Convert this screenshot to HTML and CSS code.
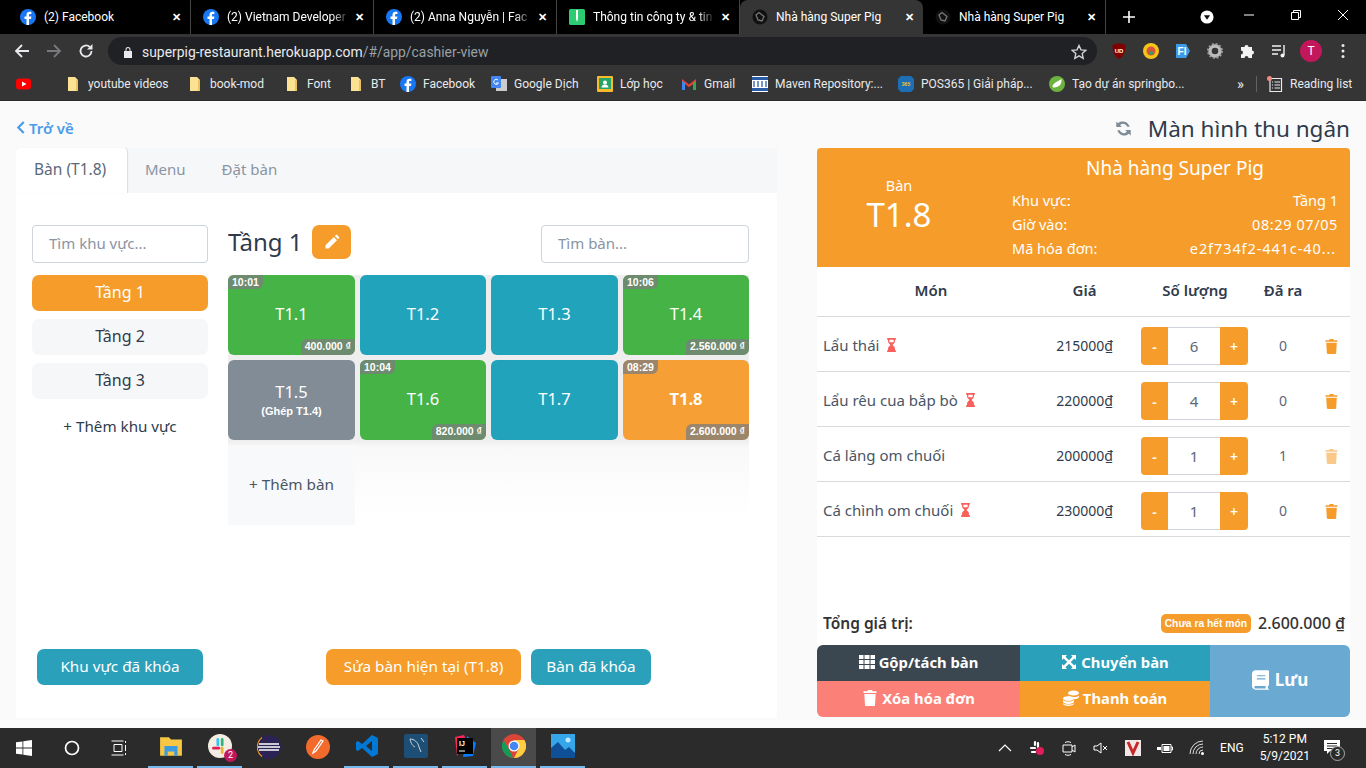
FILE: index.html
```html
<!DOCTYPE html>
<html lang="vi">
<head>
  <meta charset="UTF-8">
  <title>Nhà hàng Super Pig</title>
  <link rel="stylesheet" href="styles.css">
</head>
<body>
  <svg class="sprite" width="0" height="0">
    <symbol id="i-fb" viewBox="0 0 16 16"><circle cx="8" cy="8" r="8" fill="#1877f2"/><path fill="#fff" d="M9 16V10h2l.4-2.400H9V6.200c0-.8.3-1.200 1.200-1.200h1.200V2.900C11 2.800 10.300 2.700 9.600 2.700 7.700 2.700 6.500 3.800 6.500 5.900v1.700H4.500V10h2v6z"/></symbol>
    <symbol id="i-folder" viewBox="0 0 12 16"><path fill="#fde293" d="M1 1h7l3 3v11H1z"/><path fill="#e8c35f" d="M9 4h2v11H9z"/></symbol>
    <symbol id="i-pig" viewBox="0 0 16 16"><circle cx="8" cy="8" r="7.500" fill="#111"/><path fill="none" stroke="#777" stroke-width="1.300" d="M4 6l3-2.500 5 4-2 4.500-4-1z"/></symbol>
    <symbol id="i-pencil" viewBox="0 0 16 16"><path fill="currentColor" d="M1.500 11.300 9.800 3l3.200 3.200-8.300 8.300H1.500zM10.900 1.900l.9-.8c.4-.4 1-.4 1.400 0l1.800 1.800c.4.400.4 1 0 1.400l-.9.900z"/></symbol>
    <symbol id="i-refresh" viewBox="0 0 16 16"><path fill="currentColor" d="M13.800 6.400h-2.300a4 4 0 0 0-6.700-1.500l1.600 1.600H1.200V1.300l1.700 1.700A6.700 6.700 0 0 1 13.800 6.400zM2.200 9.600h2.300a4 4 0 0 0 6.700 1.500L9.600 9.500h5.200v5.200L13.100 13A6.700 6.700 0 0 1 2.200 9.600z"/></symbol>
    <symbol id="i-hourglass" viewBox="0 0 12 16"><path fill="currentColor" d="M1 0h10v2H10v1.500C10 6 8 7 7.200 8 8 9 10 10 10 12.500V14h1v2H1v-2h1v-1.500C2 10 4 9 4.800 8 4 7 2 6 2 3.500V2H1zM3.500 2v1.500c0 .5.100.9.300 1.300h4.400c.2-.4.300-.8.300-1.300V2z"/></symbol>
    <symbol id="i-trash" viewBox="0 0 14 16"><path fill="currentColor" d="M5 0h4l.6 1.300H13.500V3H.5V1.300H4.400zM1.300 4h11.400l-.7 11c0 .6-.5 1-1 1H3c-.5 0-1-.4-1-1z"/></symbol>
    <symbol id="i-grid" viewBox="0 0 16 16"><path fill="currentColor" d="M0 1h4.500v4H0zM5.500 1h5v4h-5zM11.500 1H16v4h-4.500zM0 6h4.500v4H0zM5.500 6h5v4h-5zM11.500 6H16v4h-4.500zM0 11h4.500v4H0zM5.500 11h5v4h-5zM11.500 11H16v4h-4.500z"/></symbol>
    <symbol id="i-move" viewBox="0 0 16 16"><path fill="currentColor" d="M1 1h5L4.500 2.800 8 6.200 11.500 2.800 10 1h5v5l-1.700-1.500L9.800 8l3.500 3.500L15 10v5h-5l1.500-1.700L8 9.800l-3.500 3.500L6 15H1v-5l1.700 1.500L6.200 8 2.700 4.500 1 6z"/></symbol>
    <symbol id="i-coins" viewBox="0 0 16 16"><ellipse cx="10.500" cy="3" rx="5.500" ry="2.500" fill="currentColor"/><path fill="currentColor" d="M5 5.500c1 1 2.500 1.500 5.500 1.500S15 6.500 16 5.500V7c0 1-2 2-5 2.200-1.500-1-3.500-1.400-6-1.400zM0 10c1 1 2.800 1.500 5.500 1.500S10 11 11 10v1.500C11 12.900 8.500 14 5.500 14S0 12.900 0 11.500zM0 13c1 1 2.800 1.500 5.500 1.500S10 14 11 13v.500C11 14.900 8.500 16 5.500 16S0 14.900 0 13.500z"/><ellipse cx="5.500" cy="8.500" rx="5.500" ry="2.300" fill="currentColor"/></symbol>
    <symbol id="i-book" viewBox="0 0 14 16"><path fill="currentColor" fill-rule="evenodd" d="M3 0h10c.6 0 1 .4 1 1v11c0 .5-.3.900-.8 1-.3.600-.3 1.300 0 2 .5.100.8.500.8 1H3c-1.700 0-3-1.300-3-3V3c0-1.700 1.300-3 3-3zM4 4v1h7V4zM4 6.500v1h7v-1zM3 13c-.6 0-1 .4-1 1s.4 1 1 1h8.300c-.2-.7-.2-1.300 0-2z"/></symbol>
    <symbol id="i-star" viewBox="0 0 16 16"><path fill="none" stroke="currentColor" stroke-width="1.400" d="M8 1.500l2 4.400 4.700.5-3.500 3.200 1 4.700L8 11.900l-4.200 2.400 1-4.700L1.300 6.400 6 5.900z"/></symbol>
  </svg>

  <div class="tabstrip">
    <div class="tab"><svg class="favicon"><use href="#i-fb"/></svg><span class="tab-title">(2) Facebook</span><span class="tab-x">✕</span></div>
    <div class="tab"><svg class="favicon"><use href="#i-fb"/></svg><span class="tab-title fade">(2) Vietnam Developer</span><span class="tab-x">✕</span></div>
    <div class="tab"><svg class="favicon"><use href="#i-fb"/></svg><span class="tab-title fade">(2) Anna Nguyễn | Fac</span><span class="tab-x">✕</span></div>
    <div class="tab"><svg class="favicon" viewBox="0 0 16 16"><rect width="16" height="16" rx="1.500" fill="#2ecc71"/><path fill="#fff" d="M7 1h2v9l-1 3-1-3z"/></svg><span class="tab-title fade">Thông tin công ty &amp; tin</span><span class="tab-x">✕</span></div>
    <div class="tab active"><svg class="favicon"><use href="#i-pig"/></svg><span class="tab-title">Nhà hàng Super Pig</span><span class="tab-x">✕</span></div>
    <div class="tab"><svg class="favicon"><use href="#i-pig"/></svg><span class="tab-title">Nhà hàng Super Pig</span><span class="tab-x">✕</span></div>
    <svg class="newtab" viewBox="0 0 12 12"><path fill="none" stroke="#fff" stroke-width="1.600" d="M6 0v12M0 6h12"/></svg>
    <svg class="media-dot" viewBox="0 0 16 16"><circle cx="8" cy="8" r="7.500" fill="#fff"/><path d="M4.500 6h7L8 11z" fill="#111"/></svg>
    <div class="winctl">
      <svg viewBox="0 0 12 12"><path stroke="#fff" d="M1 6h10"/></svg>
      <svg viewBox="0 0 12 12"><path fill="none" stroke="#fff" d="M1.500 3.500h7v7h-7zM3.500 3.500v-2h7v7h-2"/></svg>
      <svg viewBox="0 0 12 12"><path stroke="#fff" d="M1 1l10 10M11 1L1 11"/></svg>
    </div>
  </div>

  <div class="toolbar">
    <svg class="nav-ico" viewBox="0 0 16 16"><path fill="none" stroke="#e8eaed" stroke-width="1.800" d="M15 8H2M8 2L2 8l6 6"/></svg>
    <svg class="nav-ico" viewBox="0 0 16 16"><path fill="none" stroke="#77797c" stroke-width="1.800" d="M1 8h13M8 2l6 6-6 6"/></svg>
    <svg class="nav-ico" viewBox="0 0 16 16"><path fill="none" stroke="#e8eaed" stroke-width="1.800" d="M13.500 8a5.500 5.500 0 1 1-1.700-4"/><path fill="#e8eaed" d="M14.500 1v5.500H9z"/></svg>
    <div class="omnibox">
      <svg class="lock" viewBox="0 0 10 12"><path fill="#e8eaed" d="M1 5h8v7H1zM2.500 5V3.500a2.500 2.500 0 0 1 5 0V5H6.500V3.500a1.500 1.500 0 0 0-3 0V5z"/></svg>
      <span class="url"><b>superpig-restaurant.herokuapp.com</b>/#/app/cashier-view</span>
      <svg class="star"><use href="#i-star"/></svg>
    </div>
    <div class="extensions">
      <svg viewBox="0 0 16 16"><path fill="#800000" d="M1.500 2L8 0l6.500 2c0 6-1 10.500-6.500 14C2.500 12.500 1.500 8 1.500 2z"/><text x="8" y="9.500" class="ext-text">UD</text></svg>
      <svg viewBox="0 0 16 16"><circle cx="8" cy="8" r="8" fill="#f5c518"/><circle cx="8" cy="8" r="4.500" fill="#d9543f"/><circle cx="8" cy="10" r="2" fill="#3c9a5f"/></svg>
      <svg viewBox="0 0 16 16"><path fill="#3d9ae8" d="M1 1h10l4 7-4 7H1z"/><text x="7" y="11.500" class="ext-text big">FI</text></svg>
      <svg viewBox="0 0 16 16"><circle cx="8" cy="8" r="5" fill="none" stroke="#bdbdbd" stroke-width="3.400"/><circle cx="8" cy="8" r="7" fill="none" stroke="#9b9b9b" stroke-width="2" stroke-dasharray="2 1.700"/></svg>
      <svg viewBox="0 0 16 16"><path fill="#f1f3f4" d="M2 4h3.500a2 2 0 1 1 4 0H13v3.500a2 2 0 1 1 0 4V15H9.500a2 2 0 1 0-4 0H2v-3.500a2 2 0 1 0 0-4z"/></svg>
      <svg viewBox="0 0 16 16"><path fill="none" stroke="#f1f3f4" stroke-width="1.400" d="M1 3h9M1 7h9M1 11h6M13 2v10"/><circle cx="11.500" cy="12.500" r="2" fill="#f1f3f4"/></svg>
    </div>
    <span class="avatar">T</span>
    <svg class="kebab" viewBox="0 0 4 16"><circle cx="2" cy="2.500" r="1.500" fill="#e8eaed"/><circle cx="2" cy="8" r="1.500" fill="#e8eaed"/><circle cx="2" cy="13.500" r="1.500" fill="#e8eaed"/></svg>
  </div>

  <div class="bookmarks">
    <div class="bm"><svg class="bm-ico" viewBox="0 0 16 16"><rect y="2.500" width="15" height="11" rx="3" fill="#f00"/><path fill="#fff" d="M6 5.500l4.500 2.500L6 10.500z"/></svg></div>
    <div class="bm"><svg class="bm-ico"><use href="#i-folder"/></svg>youtube videos</div>
    <div class="bm"><svg class="bm-ico"><use href="#i-folder"/></svg>book-mod</div>
    <div class="bm"><svg class="bm-ico"><use href="#i-folder"/></svg>Font</div>
    <div class="bm"><svg class="bm-ico"><use href="#i-folder"/></svg>BT</div>
    <div class="bm"><svg class="bm-ico"><use href="#i-fb"/></svg>Facebook</div>
    <div class="bm"><svg class="bm-ico" viewBox="0 0 16 16"><rect x="5" y="3" width="11" height="12" fill="#ccc"/><rect width="10" height="12" rx="1" fill="#4285f4"/><path fill="none" stroke="#fff" d="M7 4a2.500 2.500 0 1 0 .500 3H5"/></svg>Google Dịch</div>
    <div class="bm"><svg class="bm-ico" viewBox="0 0 16 16"><rect width="16" height="16" rx="1" fill="#f9bb2d"/><rect x="2" y="2" width="12" height="11" fill="#25a667"/><circle cx="8" cy="6.500" r="2" fill="#fff"/><path fill="#fff" d="M4.500 11.500c0-4 7-4 7 0z"/></svg>Lớp học</div>
    <div class="bm"><svg class="bm-ico" viewBox="0 0 16 16"><path fill="#ea4335" d="M1 3l7 5.500L15 3v3L8 11 1 6z"/><path fill="#4285f4" d="M1 5v9h3V7z"/><path fill="#34a853" d="M15 5v9h-3V7z"/></svg>Gmail</div>
    <div class="bm"><svg class="bm-ico" viewBox="0 0 16 16"><rect width="16" height="16" fill="#fff"/><rect y="1" width="16" height="3" fill="#2a5ca8"/><rect y="12" width="16" height="3" fill="#2a5ca8"/><path stroke="#2a5ca8" stroke-width="1.300" d="M2 5v6M6 5v6M10 5v6M14 5v6"/></svg>Maven Repository:...</div>
    <div class="bm"><svg class="bm-ico" viewBox="0 0 16 16"><path fill="#1c6fb5" d="M3 0h10l3 3v10l-3 3H3l-3-3V3z"/><text x="8" y="10" class="ext-text pos">365</text></svg>POS365 | Giải pháp...</div>
    <div class="bm"><svg class="bm-ico" viewBox="0 0 16 16"><circle cx="8" cy="8" r="8" fill="#6db33f"/><path fill="#fff" d="M12.500 3c.5 4.500-2 8.500-7.500 8.500-1 0-1.500-.5-1.500-1C4 7 8 6 12.500 3z"/></svg>Tạo dự án springbo...</div>
    <div class="bm-end">
      <span class="bm-more">»</span>
      <span class="bm-sep"></span>
      <svg class="bm-ico" viewBox="0 0 16 16"><path fill="none" stroke="#e8eaed" stroke-width="1.200" d="M3 2.500h11.500v13H3zM5 6h1M7.500 6H13M5 9h1M7.500 9H13M5 12h1M7.500 12H13"/><circle cx="2.500" cy="2.500" r="2.500" fill="#f28b82"/></svg>
      <span>Reading list</span>
    </div>
  </div>

  <div class="page">
    <div class="col-left">
      <div class="page-head"><a class="back" href="#"><svg viewBox="0 0 8 12"><path fill="none" stroke="currentColor" stroke-width="2" d="M7 1L2 6l5 5"/></svg>Trở về</a></div>

      <div class="navtabs">
        <a class="navtab active">Bàn (T1.8)</a>
        <a class="navtab">Menu</a>
        <a class="navtab">Đặt bàn</a>
      </div>

      <div class="panel">
        <div class="panel-body">
          <aside class="areas">
            <input class="search" placeholder="Tìm khu vực...">
            <div class="area selected">Tầng 1</div>
            <div class="area">Tầng 2</div>
            <div class="area">Tầng 3</div>
            <div class="area-add">+ Thêm khu vực</div>
          </aside>

          <section class="floor">
            <div class="floor-head">
              <h2>Tầng 1</h2>
              <button class="edit-btn"><svg><use href="#i-pencil"/></svg></button>
              <input class="search search-table" placeholder="Tìm bàn...">
            </div>
            <div class="tables">
              <div class="tile busy"><span class="time">10:01</span>T1.1<span class="price">400.000 ₫</span></div>
              <div class="tile free">T1.2</div>
              <div class="tile free">T1.3</div>
              <div class="tile busy"><span class="time">10:06</span>T1.4<span class="price">2.560.000 ₫</span></div>
              <div class="tile merged">T1.5<small>(Ghép T1.4)</small></div>
              <div class="tile busy"><span class="time">10:04</span>T1.6<span class="price">820.000 ₫</span></div>
              <div class="tile free">T1.7</div>
              <div class="tile current"><span class="time">08:29</span>T1.8<span class="price">2.600.000 ₫</span></div>
              <div class="tile add">+ Thêm bàn</div>
            </div>
          </section>
        </div>

        <div class="panel-foot">
          <div><button class="btn teal wide">Khu vực đã khóa</button></div>
          <div class="foot-right">
            <button class="btn orange">Sửa bàn hiện tại (T1.8)</button>
            <button class="btn teal">Bàn đã khóa</button>
          </div>
        </div>
      </div>
    </div>

    <div class="col-right">
      <div class="page-head title-row">
        <svg class="refresh"><use href="#i-refresh"/></svg>
        <h1>Màn hình thu ngân</h1>
      </div>

      <div class="bill">
        <div class="bill-head">
          <div class="bill-table"><span>Bàn</span><strong>T1.8</strong></div>
          <div class="bill-info">
            <h3>Nhà hàng Super Pig</h3>
            <div class="info-row"><span>Khu vực:</span><span>Tầng 1</span></div>
            <div class="info-row"><span>Giờ vào:</span><span class="num">08:29 07/05</span></div>
            <div class="info-row"><span>Mã hóa đơn:</span><span class="num code">e2f734f2-441c-40...</span></div>
          </div>
        </div>

        <div class="line line-head">
          <div class="c-name">Món</div><div class="c-price">Giá</div><div class="c-qty">Số lượng</div><div class="c-done">Đã ra</div><div></div>
        </div>
        <div class="line">
          <div class="c-name">Lẩu thái <svg class="wait"><use href="#i-hourglass"/></svg></div>
          <div class="c-price">215000₫</div>
          <div class="c-qty"><div class="stepper"><button>-</button><input value="6"><button>+</button></div></div>
          <div class="c-done">0</div>
          <div class="c-del"><svg><use href="#i-trash"/></svg></div>
        </div>
        <div class="line">
          <div class="c-name">Lẩu rêu cua bắp bò <svg class="wait"><use href="#i-hourglass"/></svg></div>
          <div class="c-price">220000₫</div>
          <div class="c-qty"><div class="stepper"><button>-</button><input value="4"><button>+</button></div></div>
          <div class="c-done">0</div>
          <div class="c-del"><svg><use href="#i-trash"/></svg></div>
        </div>
        <div class="line">
          <div class="c-name">Cá lăng om chuối</div>
          <div class="c-price">200000₫</div>
          <div class="c-qty"><div class="stepper"><button>-</button><input value="1"><button>+</button></div></div>
          <div class="c-done">1</div>
          <div class="c-del off"><svg><use href="#i-trash"/></svg></div>
        </div>
        <div class="line">
          <div class="c-name">Cá chình om chuối <svg class="wait"><use href="#i-hourglass"/></svg></div>
          <div class="c-price">230000₫</div>
          <div class="c-qty"><div class="stepper"><button>-</button><input value="1"><button>+</button></div></div>
          <div class="c-done">0</div>
          <div class="c-del"><svg><use href="#i-trash"/></svg></div>
        </div>

        <div class="total">
          <span class="total-label">Tổng giá trị:</span>
          <span class="pill">Chưa ra hết món</span>
          <span class="total-value">2.600.000 ₫</span>
        </div>

        <div class="actions">
          <button class="act dark"><svg><use href="#i-grid"/></svg>Gộp/tách bàn</button>
          <button class="act blue"><svg><use href="#i-move"/></svg>Chuyển bàn</button>
          <button class="act save"><svg><use href="#i-book"/></svg>Lưu</button>
          <button class="act red"><svg><use href="#i-trash"/></svg>Xóa hóa đơn</button>
          <button class="act amber"><svg><use href="#i-coins"/></svg>Thanh toán</button>
        </div>
      </div>
    </div>
  </div>

  <div class="taskbar">
    <svg class="tb-start" viewBox="0 0 16 16"><path fill="#fff" d="M0 2.300l6.500-.9v6.200H0zM7.300 1.300L16 0v7.600H7.300zM0 8.400h6.500v6.200L0 13.700zM7.300 8.400H16V16l-8.700-1.300z"/></svg>
    <svg class="tb-search" viewBox="0 0 16 16"><circle cx="8" cy="8" r="6.500" fill="none" stroke="#fff" stroke-width="1.700"/></svg>
    <svg class="tb-view" viewBox="0 0 16 16"><path fill="none" stroke="#fff" d="M.5 1h12M3 4.500h8v7H3zM.5 15h12M14.500 1v2M14.500 5v6M14.500 13v2"/></svg>
    <div class="tb-apps">
      <div class="tb-app open"><svg viewBox="0 0 22 22"><path fill="#f7c744" d="M1 3h8l2 2h10v15H1z"/><path fill="#3d9be0" d="M5 11h12v9h-3v-4H8v4H5z"/></svg></div>
      <div class="tb-app open"><svg viewBox="0 0 22 22"><circle cx="11" cy="11" r="11" fill="#f4ede4"/><path stroke="#e01e5a" stroke-width="2.500" stroke-linecap="round" d="M5 13h5"/><path stroke="#36c5f0" stroke-width="2.500" stroke-linecap="round" d="M9 5v5"/><path stroke="#2eb67d" stroke-width="2.500" stroke-linecap="round" d="M13 5v5"/><path stroke="#ecb22e" stroke-width="2.500" stroke-linecap="round" d="M13 13v4"/></svg><span class="tb-badge">2</span></div>
      <div class="tb-app"><svg viewBox="0 0 24 24"><circle cx="12" cy="12" r="12" fill="#2c2255"/><path fill="none" stroke="#f7941e" stroke-width="1.200" d="M5 2.500a12 12 0 0 0 0 19"/><path stroke="#fff" stroke-width="1.500" d="M2 9h20M1 12h22M2 15h20"/></svg></div>
      <div class="tb-app"><svg viewBox="0 0 24 24"><circle cx="12" cy="12" r="12" fill="#f26b2d"/><path fill="none" stroke="#fff" stroke-width="1.300" d="M7 18l3-2 7-10-2-1-7 10z"/></svg></div>
      <div class="tb-app open"><svg viewBox="0 0 24 24"><path fill="#0078d4" d="M17 1l6 3v16l-6 3L7 14l-4 3-2-1V8l2-1 4 3zM17 7l-6 5 6 5z"/></svg></div>
      <div class="tb-app open"><svg viewBox="0 0 24 24"><rect width="24" height="24" rx="2" fill="#1d4f76"/><path fill="none" stroke="#cfd8dc" d="M6 5c4 0 8 3 9 8l2 5M6 5c1 5 3 7 5 8M17 4l3 4"/></svg></div>
      <div class="tb-app open"><svg viewBox="0 0 24 24"><path fill="#fe2857" d="M2 3l9-2 3 7-10 14z"/><path fill="#087cfa" d="M14 2l9 7-3 13-10 1z"/><rect x="4" y="4" width="16" height="16" fill="#000"/><text x="6" y="12" class="ij">IJ</text><path stroke="#fff" d="M6 17h6"/></svg></div>
      <div class="tb-app open on"><svg viewBox="0 0 24 24"><circle cx="12" cy="12" r="12" fill="#db4437"/><path fill="#0f9d58" d="M12 24A12 12 0 0 1 1.600 6L7 15.500 11 24z"/><path fill="#ffcd40" d="M12 24a12 12 0 0 0 10.400-18H12l5 8z"/><circle cx="12" cy="12" r="5.500" fill="#fff"/><circle cx="12" cy="12" r="4.300" fill="#4285f4"/></svg></div>
      <div class="tb-app open"><svg viewBox="0 0 24 24"><rect width="24" height="24" fill="#35a6e8"/><path fill="#0f4f96" d="M0 24V14l7-6 7 8 4-3 6 6v5z"/><circle cx="17" cy="6" r="2.500" fill="#bfe7ff"/></svg></div>
    </div>
    <div class="tray">
      <svg class="t-ico" viewBox="0 0 16 16"><path fill="none" stroke="#fff" stroke-width="1.200" d="M2 11l6-6 6 6"/></svg>
      <svg class="t-ico" viewBox="0 0 16 16"><path stroke="#fff" stroke-width="2.200" stroke-linecap="round" d="M2 8h4M6 2v3M3 12h3M9 3v4"/><circle cx="11" cy="11" r="4" fill="#e01e5a"/></svg>
      <svg class="t-ico" viewBox="0 0 16 16"><path fill="none" stroke="#fff" d="M2 5h9v7H2zM11 7l3-2v7l-3-2M4 2.500c2-1 4-1 6 0M4 14.500c2 1 4 1 6 0"/></svg>
      <svg class="t-ico" viewBox="0 0 16 16"><path fill="none" stroke="#fff" d="M1 6h3l4-3v10l-4-3H1zM10 6l4 4M14 6l-4 4"/></svg>
      <svg class="t-ico" viewBox="0 0 16 16"><rect width="16" height="16" fill="#f3e6e6"/><path fill="none" stroke="#c62828" stroke-width="3" d="M3 2l5 11 5-11"/></svg>
      <svg class="t-ico" viewBox="0 0 16 16"><path fill="none" stroke="#fff" d="M5 4.500h9v8H5zM14 7h1.500v3H14"/><path fill="#fff" d="M6.500 6h6v5h-6zM0 7h4v3H0z"/></svg>
      <svg class="t-ico" viewBox="0 0 16 16"><path fill="none" stroke="#ddd" d="M1 14A13 13 0 0 1 14 1M4 14A10 10 0 0 1 14 4M7 14a7 7 0 0 1 7-7M10 14a4 4 0 0 1 4-4"/><circle cx="13.500" cy="13.500" r="1.500" fill="#fff"/></svg>
      <span class="tray-lang">ENG</span>
      <div class="clock"><span>5:12 PM</span><span>5/9/2021</span></div>
      <div class="notif"><svg viewBox="0 0 16 16"><path fill="#fff" d="M0 1h16v11H6l-3 3v-3H0z"/><path stroke="#2b2b2b" d="M3 4.500h10M3 7h10M3 9.500h6"/></svg><span>3</span></div>
    </div>
  </div>
</body>
</html>
```
FILE: styles.css
```css
* {
  box-sizing: border-box;
}

html, body {
  height: 768px;
  overflow: hidden;
}

body {
  margin: 0;
  font-family: "Noto Sans", sans-serif;
  color: #2f3b4c;
  background: #fafafa;
}

.sprite {
  position: absolute;
}

input, button {
  font-family: inherit;
}

button {
  border: none;
  cursor: pointer;
}

/* browser chrome */
.tabstrip {
  height: 34px;
  background: #000;
  display: flex;
  align-items: center;
  padding-left: 8px;
  color: #fff;
  font-family: Roboto, sans-serif;
  font-size: 12px;
}

.tab {
  width: 183px;
  height: 34px;
  display: flex;
  align-items: center;
  padding: 0 6px 0 12px;
  border-right: 1px solid #444;
}

.tab.active {
  background: #353535;
  border-right: none;
  border-radius: 8px 8px 0 0;
}

.favicon {
  width: 16px;
  height: 16px;
  flex: none;
  margin-right: 8px;
}

.tab-title {
  flex: 1;
  min-width: 0;
  overflow: hidden;
  white-space: nowrap;
}

.tab-title.fade {
  -webkit-mask-image: linear-gradient(90deg, #000 86%, transparent);
  mask-image: linear-gradient(90deg, #000 86%, transparent);
}

.tab-x {
  width: 16px;
  flex: none;
  font-size: 11px;
  font-weight: 700;
  text-align: center;
  margin-left: 2px;
}

.newtab {
  width: 12px;
  height: 12px;
  margin-left: 17px;
}

.media-dot {
  width: 14px;
  height: 14px;
  margin-left: 65px;
}

.winctl {
  margin-left: auto;
  display: flex;
  gap: 35px;
  padding-right: 17px;
  align-self: flex-start;
  padding-top: 9px;
}

.winctl svg {
  width: 12px;
  height: 12px;
}

.toolbar {
  height: 34px;
  background: #353535;
  display: flex;
  align-items: center;
  padding-left: 14px;
}

.nav-ico {
  width: 16px;
  height: 16px;
  margin-right: 16px;
}

.omnibox {
  width: 989px;
  height: 28px;
  margin-left: -2px;
  background: #202124;
  border-radius: 14px;
  display: flex;
  align-items: center;
  padding: 1px 10px 0 15px;
  font-family: Roboto, sans-serif;
  font-size: 13.900px;
  color: #9aa0a6;
}

.lock {
  width: 10px;
  height: 12px;
  margin-right: 9px;
}

.url {
  flex: 1;
}

.url b {
  font-weight: 400;
  color: #e8eaed;
}

.star {
  width: 16px;
  height: 16px;
  color: #d0d3d6;
}

.extensions {
  display: flex;
  gap: 16px;
  margin-left: 14px;
}

.extensions svg {
  width: 16px;
  height: 16px;
}

.ext-text {
  font-family: "Liberation Sans", sans-serif;
  font-size: 6px;
  font-weight: 700;
  fill: #fff;
  text-anchor: middle;
}

.ext-text.big {
  font-size: 10px;
}

.ext-text.pos {
  font-size: 5px;
  fill: #f5c518;
}

.avatar {
  width: 22px;
  height: 22px;
  margin-left: 13px;
  border-radius: 50%;
  background: #c2185b;
  color: #fff;
  font-family: Roboto, sans-serif;
  font-size: 12px;
  display: flex;
  align-items: center;
  justify-content: center;
}

.kebab {
  width: 4px;
  height: 16px;
  margin-left: 19px;
}

.bookmarks {
  height: 33px;
  background: #353535;
  display: grid;
  grid-template-columns: 49px 122px 97px 64px 52px 91px 106px 84px 71px 146px 151px 188px 1fr;
  align-items: center;
  padding-left: 16px;
  color: #e8eaed;
  font-family: Roboto, sans-serif;
  font-size: 12px;
  border-bottom: 1px solid #2b2b2b;
}

.bm {
  display: flex;
  align-items: center;
  white-space: nowrap;
}

.bm-ico {
  width: 16px;
  height: 16px;
  flex: none;
  margin-right: 7px;
}

.bm-end {
  display: flex;
  align-items: center;
}

.bm-more {
  width: 19px;
  font-size: 15px;
}

.bm-sep {
  width: 1px;
  height: 16px;
  background: #5f6368;
  margin: 0 10px 0 0;
}

/* page */
.page {
  height: 627px;
  padding: 0 16px;
  display: grid;
  grid-template-columns: 761px 533px;
  column-gap: 40px;
}

.page-head {
  height: 47px;
  display: flex;
  align-items: center;
  padding-top: 8px;
}

.back {
  display: flex;
  align-items: center;
  gap: 4px;
  margin-top: -2px;
  color: #4a9be8;
  font-size: 15px;
  font-weight: 600;
  text-decoration: none;
}

.back svg {
  width: 9px;
  height: 13px;
}

.title-row {
  justify-content: flex-end;
  gap: 16px;
}

.title-row h1 {
  margin: 0;
  font-size: 22.500px;
  font-weight: 400;
}

.refresh {
  width: 17px;
  height: 17px;
  color: #7f8c96;
}

.navtabs {
  height: 45px;
  display: flex;
  background: #f6f7f9;
  font-size: 15px;
}

.navtab {
  padding: 0 18px 3px;
  display: flex;
  align-items: center;
  color: #8a94a3;
}

.navtab.active {
  width: 111px;
  background: #fff;
  color: #5c6878;
  border-radius: 4px 4px 0 0;
  box-shadow: 1px 0 1px #d9dce1;
  white-space: nowrap;
  font-size: 15.500px;
}

.panel {
  height: 525px;
  background: #fff;
  padding: 32px 28px 33px 16px;
  display: flex;
  flex-direction: column;
  justify-content: space-between;
}

.panel-body, .panel-foot {
  display: grid;
  grid-template-columns: 176px 521px;
  column-gap: 20px;
}

.search {
  width: 100%;
  height: 38px;
  border: 1px solid #ced4da;
  border-radius: 4px;
  padding: 0 16px 2px;
  font-size: 15px;
  display: block;
}

.search::placeholder {
  color: #8a94a3;
  opacity: 1;
}

.area {
  height: 36px;
  margin-top: 8px;
  padding-bottom: 3px;
  border-radius: 7px;
  background: #f6f7f9;
  display: flex;
  align-items: center;
  justify-content: center;
  font-size: 16px;
}

.area.selected {
  margin-top: 12px;
  background: #f59c2a;
  color: #fff;
}

.area-add {
  margin-top: 17px;
  text-align: center;
  font-size: 15.200px;
}

.floor-head {
  height: 50px;
  display: flex;
  align-items: flex-start;
}

.floor-head h2 {
  margin: 0 10px 0 0;
  font-size: 24px;
  font-weight: 400;
  line-height: 34px;
}

.edit-btn {
  width: 39px;
  height: 34px;
  border-radius: 7px;
  background: #f59c2a;
  color: #fff;
  display: flex;
  align-items: center;
  justify-content: center;
  padding: 0;
}

.edit-btn svg {
  width: 16px;
  height: 16px;
}

.search-table {
  width: 208px;
  margin-left: auto;
}

.tables {
  display: grid;
  grid-template-columns: 127px 126px 127px 126px;
  grid-auto-rows: 80px;
  gap: 5px;
  background: linear-gradient(#eee 0, #eee 165px, #f8f8f8 172px, #fdfdfd 215px, #fff 250px);
}

.tile {
  position: relative;
  border-radius: 6px;
  display: flex;
  flex-direction: column;
  align-items: center;
  justify-content: center;
  padding-bottom: 3px;
  font-size: 16.500px;
  color: #fff;
}

.tile.busy {
  background: #45b345;
}

.tile.free {
  background: #21a3bb;
}

.tile.merged {
  background: #818c96;
}

.tile.merged small {
  font-family: "Liberation Sans", sans-serif;
  font-size: 11px;
  font-weight: 700;
  margin-top: 2px;
}

.tile.current {
  background: #f59f35;
  font-weight: 700;
}

.tile.add {
  background: #f8f9fb;
  border-radius: 0;
  color: #4a5564;
  font-size: 15.300px;
}

.time, .price {
  position: absolute;
  font-family: "Liberation Sans", sans-serif;
  font-size: 10.500px;
  font-weight: 700;
  line-height: 14px;
  background: rgba(125, 125, 125, 0.75);
  padding: 0 4px;
}

.time {
  top: 0;
  left: 0;
  border-radius: 6px 0 6px 0;
}

.price {
  right: 0;
  bottom: 0;
  padding-bottom: 2px;
  border-radius: 6px 0 6px 0;
}

.panel-foot {
  align-items: center;
}

.foot-right {
  display: flex;
  gap: 10px;
  padding-left: 98px;
}

.btn {
  width: 120px;
  height: 36px;
  border-radius: 7px;
  color: #fff;
  font-size: 15.300px;
  padding: 0 0 3px;
  white-space: nowrap;
}

.btn.teal {
  background: #2ba0ba;
}

.btn.orange {
  width: 195px;
  background: #f59c2a;
}

.btn.wide {
  width: 166px;
  margin-left: 5px;
}

/* bill on the right */
.bill {
  height: 569px;
  background: #fff;
  border-radius: 4px;
  display: flex;
  flex-direction: column;
}

.bill-head {
  height: 119px;
  background: #f59c2a;
  color: #fff;
  border-radius: 4px 4px 0 0;
  display: flex;
}

.bill-table {
  width: 195px;
  padding: 30px 31px 0 0;
  text-align: center;
  display: flex;
  flex-direction: column;
  line-height: 1;
  font-size: 14.500px;
}

.bill-table strong {
  font-size: 33px;
  font-weight: 400;
  margin-top: 5px;
}

.bill-info {
  flex: 1;
  padding: 8px 12px 0 0;
  font-size: 14.500px;
}

.bill-info h3 {
  margin: 0 0 8px;
  font-size: 19px;
  font-weight: 400;
  text-align: center;
  line-height: 24px;
}

.info-row {
  display: flex;
  justify-content: space-between;
  line-height: 24px;
}

.num {
  letter-spacing: 0.6px;
}

.code {
  letter-spacing: 0.9px;
  padding-right: 2px;
}

.line {
  height: 55px;
  padding-top: 4px;
  display: grid;
  grid-template-columns: 228px 80px 133px 50px 42px;
  align-items: center;
  border-bottom: 1px solid #d8dadd;
  font-size: 15px;
}

.line-head {
  height: 50px;
  padding: 0 0 3px;
  font-weight: 600;
  text-align: center;
}

.line .c-name {
  padding: 0 0 2px 6px;
  display: flex;
  align-items: center;
  gap: 7px;
  color: #4a5564;
}

.line-head .c-name {
  display: block;
  padding: 0;
  color: inherit;
}

.c-price, .c-done {
  text-align: center;
  padding-bottom: 2px;
  font-size: 14px;
  margin-left: -1px;
}

.line-head .c-price, .line-head .c-done {
  font-size: 15px;
  padding-bottom: 0;
}

.line-head .c-qty {
  padding-left: 7px;
}

.c-qty {
  padding-left: 16px;
}

.c-done {
  color: #5c6878;
  margin-left: 0;
}

.line-head .c-done {
  color: inherit;
}

.wait {
  width: 11px;
  height: 14px;
  color: #f9605c;
}

.c-del {
  display: flex;
  justify-content: center;
  padding-left: 4px;
  color: #f59c2a;
}

.c-del svg {
  width: 13px;
  height: 15px;
}

.c-del.off {
  opacity: 0.55;
}

.stepper {
  width: 107px;
  height: 38px;
  display: grid;
  grid-template-columns: 27px 52px 28px;
}

.stepper button {
  background: #f59c2a;
  color: #fff;
  padding: 0;
  font-size: 14px;
  font-weight: 600;
}

.stepper button:first-child {
  border-radius: 4px 0 0 4px;
}

.stepper button:last-child {
  border-radius: 0 4px 4px 0;
}

.stepper input {
  width: 100%;
  border: 1px solid #ced4da;
  border-width: 1px 0;
  text-align: center;
  font-size: 15px;
  color: #5c6878;
  padding: 0;
}

.total {
  margin-top: auto;
  display: flex;
  align-items: center;
  padding: 0 5px 0 6px;
  height: 30px;
  margin-bottom: 7px;
  font-weight: 600;
  font-size: 15.500px;
  color: #333;
}

.total-label {
  margin-right: auto;
}

.pill {
  background: #f59c2a;
  color: #fff;
  font-family: "Liberation Sans", sans-serif;
  font-size: 10.300px;
  font-weight: 700;
  line-height: 19px;
  padding: 0 4px;
  border-radius: 5px;
  margin-right: 7px;
}

.total-value {
  font-size: 16px;
  font-weight: 500;
}

.actions {
  height: 72px;
  display: grid;
  grid-template-columns: 203px 190px 140px;
  grid-template-rows: 36px 36px;
  border-radius: 6px;
  overflow: hidden;
}

.act {
  color: #fff;
  font-size: 14.800px;
  font-weight: 700;
  display: flex;
  align-items: center;
  justify-content: center;
  gap: 4px;
  padding: 0 0 3px;
}

.act svg {
  width: 16px;
  height: 16px;
}

.act.dark {
  background: #3a4750;
}

.act.blue {
  background: #2ba0ba;
}

.act.red {
  background: #fb8178;
}

.act.amber {
  background: #f59c2a;
}

.act.save {
  grid-column: 3;
  grid-row: 1 / 3;
  background: #6aa9d2;
  font-size: 17px;
  gap: 6px;
}

.act.save svg {
  width: 17px;
  height: 20px;
}

/* windows taskbar */
.taskbar {
  height: 40px;
  background: #2b2b2b;
  display: flex;
  align-items: center;
  color: #fff;
  font-family: Roboto, sans-serif;
  font-size: 12px;
}

.tb-start {
  width: 16px;
  height: 16px;
  margin-left: 16px;
}

.tb-search {
  width: 16px;
  height: 16px;
  margin-left: 32px;
}

.tb-view {
  width: 16px;
  height: 16px;
  margin-left: 31px;
}

.tb-apps {
  display: flex;
  margin-left: 21px;
}

.tb-app {
  position: relative;
  width: 45px;
  height: 40px;
  margin-right: 4px;
  display: flex;
  align-items: center;
  justify-content: center;
  padding-bottom: 2px;
}

.tb-app svg {
  width: 24px;
  height: 24px;
}

.tb-app.open {
  border-bottom: 2px solid #76b9ed;
}

.tb-app.on {
  background: #4a4a4a;
}

.tb-badge {
  position: absolute;
  right: 5px;
  bottom: 4px;
  width: 13px;
  height: 13px;
  border-radius: 50%;
  background: #c2185b;
  font-size: 9px;
  text-align: center;
  line-height: 13px;
}

.ij {
  font-family: "Liberation Sans", sans-serif;
  font-size: 7px;
  font-weight: 700;
  fill: #fff;
}

.tray {
  margin-left: auto;
  display: flex;
  align-items: center;
  gap: 16px;
  padding-right: 24px;
}

.t-ico {
  width: 16px;
  height: 16px;
}

.tray-lang {
  font-size: 12px;
  margin-left: -1px;
}

.clock {
  display: flex;
  flex-direction: column;
  align-items: center;
  line-height: 17px;
}

.notif {
  position: relative;
  width: 18px;
  height: 18px;
  margin-left: -2px;
}

.notif svg {
  width: 16px;
  height: 16px;
}

.notif span {
  position: absolute;
  right: -3px;
  bottom: -4px;
  width: 15px;
  height: 15px;
  border-radius: 50%;
  background: #2b2b2b;
  border: 1px solid #aaa;
  font-size: 9px;
  text-align: center;
  line-height: 13px;
}
```
